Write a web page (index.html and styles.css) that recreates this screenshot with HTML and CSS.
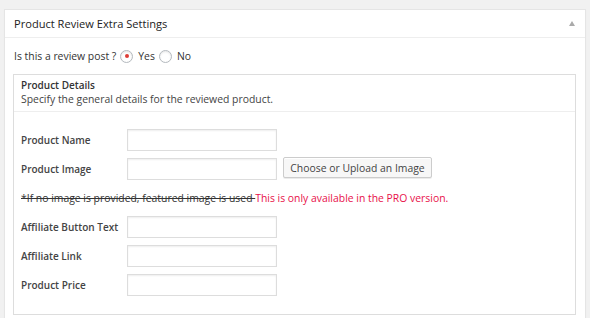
FILE: index.html
```html
<!DOCTYPE html>
<html lang="en">
  <head>
    <meta charset="UTF-8" />
    <title>Product Review Extra Settings</title>
    <link rel="stylesheet" href="styles.css">
  </head>
  <body>
    <div class="postbox">
      <div class="postbox-head">
        <h3>Product Review Extra Settings</h3>
        <span class="toggle"></span>
      </div>
      <div class="inside">
        <p class="review-q">
          <span>Is this a review post ?</span>
          <span class="radio checked"></span><span class="opt">Yes</span>
          <span class="radio"></span><span class="opt">No</span>
        </p>
        <div class="details">
          <div class="details-head">
            <h4>Product Details</h4>
            <p>Specify the general details for the reviewed product.</p>
          </div>
          <div class="fields">
            <label>Product Name</label>
            <div><input type="text" /></div>
            <label>Product Image</label>
            <div class="with-btn"><input type="text" /><button>Choose or Upload an Image</button></div>
            <p class="note"><s>*If no image is provided, featured image is used </s><span class="pro">This is only available in the PRO version.</span></p>
            <label>Affiliate Button Text</label>
            <div><input type="text" /></div>
            <label>Affiliate Link</label>
            <div><input type="text" /></div>
            <label>Product Price</label>
            <div><input type="text" /></div>
          </div>
        </div>
      </div>
    </div>
  </body>
</html>
```

FILE: styles.css
```css
body {
  margin: 0;
  background: #f1f1f1;
  font-family: "Open Sans", sans-serif;
  font-size: 10.4px;
  color: #444;
}
.postbox {
  margin: 9px 0 0 4px;
  width: 580px;
  height: 320px;
  background: #fff;
  border: 1px solid #e5e5e5;
  box-shadow: 0 1px 1px rgba(0, 0, 0, 0.04);
}
.postbox-head {
  height: 27px;
  border-bottom: 1px solid #eee;
  display: flex;
  align-items: center;
  justify-content: space-between;
  padding: 0 10px 0 9px;
}
.postbox-head h3 {
  margin: 0;
  font-size: 11.1px;
  font-weight: 400;
  color: #222;
}
.toggle {
  width: 0;
  height: 0;
  border-left: 3.5px solid transparent;
  border-right: 3.5px solid transparent;
  border-bottom: 5px solid #aaa;
  margin-top: -1px;
}
.inside {
  padding: 0 9px 0 8px;
}
.review-q {
  margin: 0;
  height: 36px;
  display: flex;
  align-items: center;
  padding-left: 1px;
  color: #333;
}
.radio {
  width: 11px;
  height: 11px;
  border: 1px solid #b4b9be;
  border-radius: 50%;
  box-shadow: inset 0 1px 2px rgba(0, 0, 0, 0.1);
  display: inline-flex;
  align-items: center;
  justify-content: center;
  margin: 0 5px 0 4px;
}
.radio.checked::after {
  content: "";
  width: 4px;
  height: 4px;
  border-radius: 50%;
  background: #dd3d36;
}
.details {
  border: 1px solid #ddd;
  height: 239px;
}
.details-head {
  padding: 3px 7px 5px;
  border-bottom: 1px solid #eee;
}
.details-head h4 {
  margin: 0;
  font-size: 10px;
  font-weight: 600;
  line-height: 14px;
  color: #333;
}
.details-head p {
  margin: 0;
  line-height: 14px;
}
.fields {
  display: grid;
  grid-template-columns: 106px 1fr;
  row-gap: 7px;
  align-items: center;
  padding: 17px 7px 0;
}
.fields label {
  font-size: 10px;
  font-weight: 600;
  color: #444;
}
.fields input {
  width: 150px;
  height: 22px;
  box-sizing: border-box;
  border: 1px solid #ddd;
  box-shadow: inset 0 1px 2px rgba(0, 0, 0, 0.07);
  display: block;
  margin: 0;
}
.with-btn {
  display: flex;
  align-items: flex-start;
  gap: 6px;
}
.with-btn button {
  height: 21px;
  width: 149px;
  margin-top: -1px;
  padding: 0;
  font-family: "Open Sans", sans-serif;
  font-size: 10.4px;
  color: #444;
  background: #f7f7f7;
  border: 1px solid #ccc;
  border-radius: 2px;
  box-shadow: inset 0 1px 0 #fff, 0 1px 0 rgba(0, 0, 0, 0.08);
}
.note {
  grid-column: 1 / 3;
  margin: 0;
  height: 22px;
  line-height: 22px;
}
.note s {
  color: #333;
}
.pro {
  color: #e8104a;
}
```
